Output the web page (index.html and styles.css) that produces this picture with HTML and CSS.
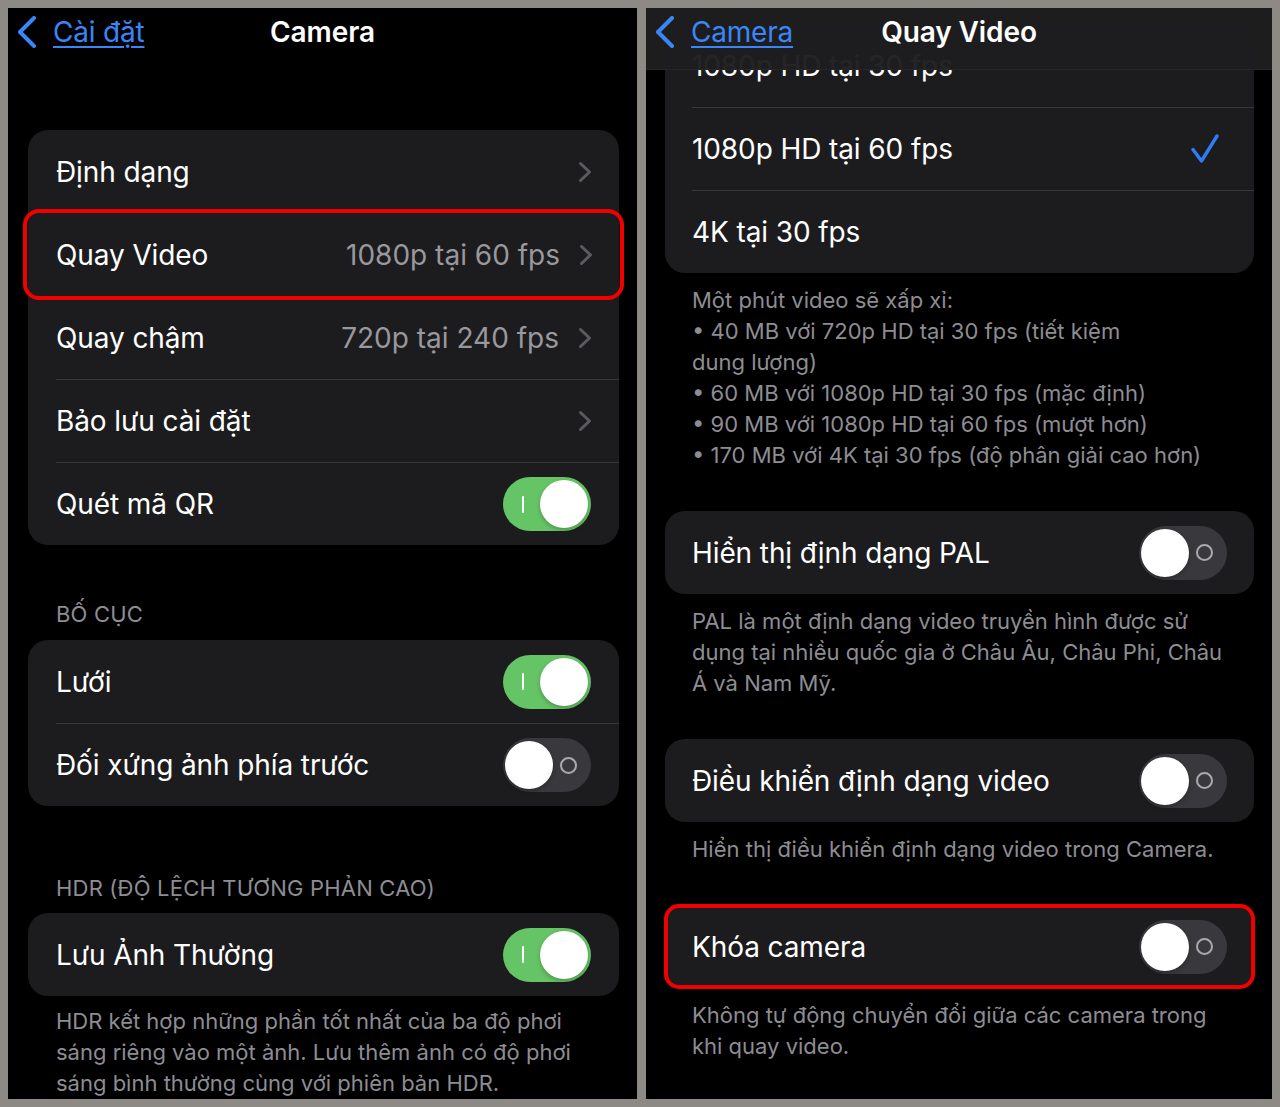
FILE: index.html
```html
<!DOCTYPE html>
<html lang="vi">
<head>
<meta charset="utf-8">
<title>Camera - Quay Video</title>
<link rel="stylesheet" href="styles.css">
</head>
<body>
<div class="frame">
  <section class="panel panel-left">
    <header class="nav">
      <a class="back">
        <svg class="back-chev" width="20" height="32" viewBox="0 0 20 32"><path d="M17 2 L3 16 L17 30" fill="none" stroke="#3a86f7" stroke-width="4" stroke-linecap="round" stroke-linejoin="round"/></svg>
        <span class="back-text">Cài đặt</span>
      </a>
      <h1 class="title">Camera</h1>
      <span></span>
    </header>

    <div class="card card-first">
      <div class="row"><div class="row-in"><span class="label">Định dạng</span><svg class="chev" width="14" height="22" viewBox="0 0 14 22"><path d="M2.5 2.5 L11.5 11 L2.5 19.5" fill="none" stroke="#5b5b5f" stroke-width="3" stroke-linecap="round" stroke-linejoin="round"/></svg></div></div>
      <div class="row row-hl"><div class="row-in no-sep"><span class="label">Quay Video</span><span class="value">1080p tại 60 fps</span><svg class="chev" width="14" height="22" viewBox="0 0 14 22"><path d="M2.5 2.5 L11.5 11 L2.5 19.5" fill="none" stroke="#5b5b5f" stroke-width="3" stroke-linecap="round" stroke-linejoin="round"/></svg></div></div>
      <div class="row"><div class="row-in no-sep"><span class="label">Quay chậm</span><span class="value">720p tại 240 fps</span><svg class="chev" width="14" height="22" viewBox="0 0 14 22"><path d="M2.5 2.5 L11.5 11 L2.5 19.5" fill="none" stroke="#5b5b5f" stroke-width="3" stroke-linecap="round" stroke-linejoin="round"/></svg></div></div>
      <div class="row"><div class="row-in sep"><span class="label">Bảo lưu cài đặt</span><svg class="chev" width="14" height="22" viewBox="0 0 14 22"><path d="M2.5 2.5 L11.5 11 L2.5 19.5" fill="none" stroke="#5b5b5f" stroke-width="3" stroke-linecap="round" stroke-linejoin="round"/></svg></div></div>
      <div class="row"><div class="row-in sep"><span class="label">Quét mã QR</span><span class="toggle on"><span class="mark"></span><span class="knob"></span></span></div></div>
    </div>

    <div class="sec-head sec-head-a">BỐ CỤC</div>
    <div class="card">
      <div class="row"><div class="row-in"><span class="label">Lưới</span><span class="toggle on"><span class="mark"></span><span class="knob"></span></span></div></div>
      <div class="row"><div class="row-in sep"><span class="label">Đối xứng ảnh phía trước</span><span class="toggle off"><span class="knob"></span><span class="ring"></span></span></div></div>
    </div>

    <div class="sec-head sec-head-b">HDR (ĐỘ LỆCH TƯƠNG PHẢN CAO)</div>
    <div class="card">
      <div class="row"><div class="row-in"><span class="label">Lưu Ảnh Thường</span><span class="toggle on"><span class="mark"></span><span class="knob"></span></span></div></div>
    </div>
    <p class="foot foot-left">HDR kết hợp những phần tốt nhất của ba độ phơi<br>sáng riêng vào một ảnh. Lưu thêm ảnh có độ phơi<br>sáng bình thường cùng với phiên bản HDR.</p>
  </section>

  <section class="panel panel-right">
    <div class="content">
      <div class="card">
        <div class="row"><div class="row-in"><span class="label">1080p HD tại 30 fps</span></div></div>
        <div class="row"><div class="row-in sep check-row"><span class="label">1080p HD tại 60 fps</span><svg class="check" width="28" height="30" viewBox="0 0 28 30"><path d="M2 15.5 L10.5 27 L26 2" fill="none" stroke="#2f7cf6" stroke-width="3.4" stroke-linecap="round" stroke-linejoin="round"/></svg></div></div>
        <div class="row"><div class="row-in sep"><span class="label">4K tại 30 fps</span></div></div>
      </div>
      <p class="foot">Một phút video sẽ xấp xỉ:<br>• 40 MB với 720p HD tại 30 fps (tiết kiệm<br>dung lượng)<br>• 60 MB với 1080p HD tại 30 fps (mặc định)<br>• 90 MB với 1080p HD tại 60 fps (mượt hơn)<br>• 170 MB với 4K tại 30 fps (độ phân giải cao hơn)</p>

      <div class="card card-gap">
        <div class="row"><div class="row-in"><span class="label">Hiển thị định dạng PAL</span><span class="toggle off"><span class="knob"></span><span class="ring"></span></span></div></div>
      </div>
      <p class="foot">PAL là một định dạng video truyền hình được sử<br>dụng tại nhiều quốc gia ở Châu Âu, Châu Phi, Châu<br>Á và Nam Mỹ.</p>

      <div class="card card-gap">
        <div class="row"><div class="row-in"><span class="label">Điều khiển định dạng video</span><span class="toggle off"><span class="knob"></span><span class="ring"></span></span></div></div>
      </div>
      <p class="foot">Hiển thị điều khiển định dạng video trong Camera.</p>

      <div class="card card-gap card-hl">
        <div class="row"><div class="row-in"><span class="label">Khóa camera</span><span class="toggle off"><span class="knob"></span><span class="ring"></span></span></div></div>
      </div>
      <p class="foot">Không tự động chuyển đổi giữa các camera trong<br>khi quay video.</p>
    </div>

    <header class="nav nav-bar">
      <a class="back">
        <svg class="back-chev" width="20" height="32" viewBox="0 0 20 32"><path d="M17 2 L3 16 L17 30" fill="none" stroke="#3a86f7" stroke-width="4" stroke-linecap="round" stroke-linejoin="round"/></svg>
        <span class="back-text">Camera</span>
      </a>
      <h1 class="title">Quay Video</h1>
      <span></span>
    </header>
  </section>
</div>
</body>
</html>
```

FILE: styles.css
```css
* { box-sizing: border-box; }

body {
  margin: 0;
  background: #8d8a86;
  font-family: Inter, "Noto Sans", "DejaVu Sans", sans-serif;
  -webkit-font-smoothing: antialiased;
}

.frame {
  width: 1280px;
  height: 1107px;
  padding: 8px;
  display: flex;
  gap: 9px;
}

.panel {
  background: #000;
  height: 1091px;
  overflow: hidden;
  position: relative;
}

.panel-left { width: 629px; }
.panel-right { width: 626px; }

/* navigation */
.nav {
  display: grid;
  grid-template-columns: 1fr auto 1fr;
  align-items: center;
  height: 48px;
  padding: 0 9px;
}

.back {
  display: flex;
  align-items: center;
  gap: 16px;
  color: #3a86f7;
  font-size: 28px;
  line-height: 34px;
  letter-spacing: -0.2px;
}

.back-chev { flex: none; }

.back-text {
  text-decoration: underline;
  text-decoration-thickness: 2px;
  text-underline-offset: 4px;
}

.title {
  margin: 0;
  color: #fff;
  font-size: 28px;
  font-weight: 600;
  line-height: 34px;
  letter-spacing: -0.1px;
}

.nav-bar {
  position: absolute;
  top: 0;
  left: 0;
  right: 0;
  height: 62px;
  padding-bottom: 14px;
  background: rgba(30, 30, 31, 0.97);
  border-bottom: 1px solid #262628;
}

/* cards and rows */
.card {
  background: #1c1c1e;
  border-radius: 20px;
  margin: 0 18px 0 20px;
}

.card-first { margin-top: 74px; }

.row {
  height: 83px;
  padding-left: 28px;
  display: flex;
  border-radius: 12px;
}

.row-in {
  flex: 1;
  display: flex;
  align-items: center;
  padding-right: 28px;
}

.row-in.sep { border-top: 1.5px solid #38383a; }

.row-hl {
  outline: 4px solid #f20000;
  outline-offset: 0;
  position: relative;
  z-index: 1;
  margin: 0 -1px;
  padding-left: 29px;
}

.label {
  flex: 1;
  color: #fff;
  font-size: 28px;
  line-height: 34px;
  white-space: nowrap;
  letter-spacing: -0.1px;
}

.value {
  color: #98989d;
  font-size: 28px;
  line-height: 34px;
  margin-right: 19px;
  white-space: nowrap;
}

.chev { flex: none; margin-right: -1px; }

/* toggles */
.toggle {
  flex: none;
  width: 88px;
  height: 54px;
  border-radius: 27px;
  display: flex;
  align-items: center;
}

.toggle.on {
  background: #65c466;
  padding-right: 3px;
}

.toggle.off {
  background: #39393d;
  padding-left: 2px;
}

.knob {
  width: 48px;
  height: 48px;
  border-radius: 50%;
  background: #fff;
  box-shadow: 0 2px 4px rgba(0, 0, 0, 0.25);
  flex: none;
}

.toggle.on .knob { margin-left: auto; }

.mark {
  width: 2px;
  height: 17px;
  background: #fff;
  margin-left: 19px;
  border-radius: 1px;
}

.ring {
  width: 17px;
  height: 17px;
  border: 2px solid #a9a9ae;
  border-radius: 50%;
  margin-left: 7px;
  flex: none;
}

/* section headers and footers */
.sec-head {
  color: #8d8d93;
  font-size: 22px;
  line-height: 30px;
  padding-left: 48px;
  margin-bottom: 11px;
  letter-spacing: 0.2px;
}

.sec-head-a { margin-top: 54px; }
.sec-head-b { margin-top: 67px; margin-bottom: 10px; }

.foot {
  margin: 12px 0 0;
  color: #8d8d93;
  font-size: 22px;
  line-height: 31px;
  padding-left: 46px;
  white-space: nowrap;
}

.foot-left {
  margin-top: 10px;
  padding-left: 48px;
}

/* right panel */
.content { padding-top: 16px; }

.panel-right .card { margin: 0 18px 0 19px; }
.panel-right .row { padding-left: 27px; }
.panel-right .row-in { padding-right: 27px; }
.panel-right .card-gap { margin-top: 40px; }

.check-row { padding-right: 35px !important; }
.check { flex: none; }

.card-hl {
  outline: 4px solid #f20000;
  outline-offset: -3px;
  border-radius: 14px;
}
```
